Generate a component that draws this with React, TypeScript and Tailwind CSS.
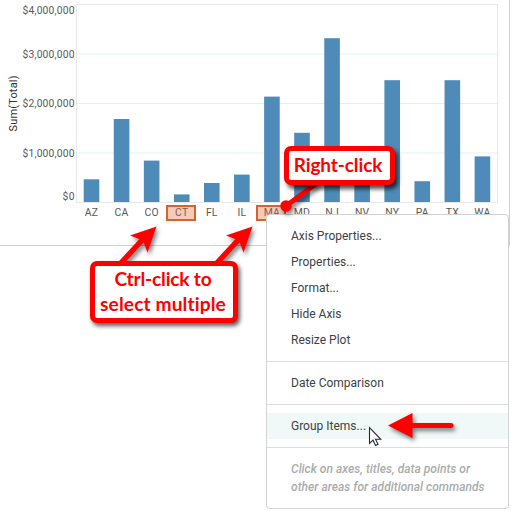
const bars: { state: string; top: number; selected?: boolean }[] = [
  { state: 'AZ', top: 179.3 },
  { state: 'CA', top: 119 },
  { state: 'CO', top: 160.6 },
  { state: 'CT', top: 194.4, selected: true },
  { state: 'FL', top: 183 },
  { state: 'IL', top: 174.6 },
  { state: 'MA', top: 96.6, selected: true },
  { state: 'MD', top: 132.8 },
  { state: 'NJ', top: 38.2 },
  { state: 'NV', top: 160 },
  { state: 'NY', top: 80.2 },
  { state: 'PA', top: 181.2 },
  { state: 'TX', top: 80.2 },
  { state: 'WA', top: 156.4 },
];

const ticks = [
  { label: '$4,000,000', y: 14 },
  { label: '$3,000,000', y: 57.5 },
  { label: '$2,000,000', y: 107 },
  { label: '$1,000,000', y: 156.5 },
  { label: '$0', y: 200 },
];

function Chart() {
  return (
    <section className="h-[246px] w-[510px] border-r border-b border-[#d0d0d0]">
      <svg width="509" height="245" className="block" fontFamily="Roboto, sans-serif" fill="#585858">
        <text transform="translate(17 131.5) rotate(-90)" fontSize="11" fill="#333" textLength="56">Sum(Total)</text>
        {ticks.map((t) => (
          <text key={t.label} x={t.label === '$0' ? 62.5 : 22.5} y={t.y} fontSize="10.3" textLength={t.label === '$0' ? 12 : 52}>{t.label}</text>
        ))}
        <path d="M77 54H497M77 153H497" stroke="#f1f9f8" strokeWidth="2" />
        <path d="M77 103.5H497" stroke="#ebebeb" />
        <rect x="76.5" y="4.5" width="421" height="198" fill="none" stroke="#e9e9e9" />
        {bars.map((b, i) => {
          const center = 91.5 + i * 30.07;
          return (
            <g key={b.state}>
              <rect x={center - 7.8} y={b.top} width="15.6" height={202 - b.top} fill="#4e8bb8" />
              {b.selected && <rect x={Math.round(center - 15)} y="206" width="28" height="14" fill="#f4cbb8" stroke="#d9612b" strokeWidth="2" />}
              <text x={center} y="215.7" fontSize="10.4" textAnchor="middle" letterSpacing="0.2" fill={b.selected ? '#8a5a48' : '#585858'}>{b.state}</text>
            </g>
          );
        })}
      </svg>
    </section>
  );
}

function MenuItem({ label, active = false }: { label: string; active?: boolean }) {
  return (
    <div className={`flex h-[26px] items-center pl-6 text-[12px] text-[#3c4245] ${active ? 'bg-[#f0f9f8]' : ''}`}>
      {label}
    </div>
  );
}

function ContextMenu() {
  return (
    <div className="absolute top-[214px] left-[266px] h-[295px] w-[243px] overflow-hidden rounded border border-[#d3d3d3] bg-white">
      <div className="border-b border-[#dcdcdc] pt-2 pb-2">
        <MenuItem label="Axis Properties..." />
        <MenuItem label="Properties..." />
        <MenuItem label="Format..." />
        <MenuItem label="Hide Axis" />
        <MenuItem label="Resize Plot" />
      </div>
      <div className="border-b border-[#dcdcdc] py-2">
        <MenuItem label="Date Comparison" />
      </div>
      <div className="border-b border-[#dcdcdc] py-2">
        <MenuItem label="Group Items..." active />
      </div>
      <div className="pt-3 pl-6 text-[12px] leading-[18px] font-medium tracking-[0.03px] whitespace-nowrap text-[#aaacac] italic">
        <p>Click on axes, titles, data points or</p>
        <p>other areas for additional commands</p>
      </div>
    </div>
  );
}

function Annotations() {
  return (
    <>
      <svg width="522" height="511" className="pointer-events-none absolute inset-0 drop-shadow-[2px_3px_2px_rgba(0,0,0,0.5)]" fill="red" stroke="red">
        <path d="M120 264L145 237M216 264L241 237" strokeWidth="5.5" />
        <path d="M156.5 226.5L147.5 252.5L143 240.5L130 235.5ZM252.5 226.5L243.5 252.5L239 240.5L226 235.5Z" stroke="none" />
        <path d="M286 206L317 183" strokeWidth="5" />
        <circle cx="286" cy="206" r="5.7" stroke="none" />
        <path d="M406 425.5H451" strokeWidth="5" strokeLinecap="round" />
        <path d="M388 425.5L412.5 413L412.5 438Z" stroke="none" />
      </svg>
      <div className="absolute top-[146px] left-[284px] flex h-[39px] w-[111px] items-center justify-center rounded-[7px] border-5 border-[red] bg-white pr-[3px] pb-px text-[19px] font-bold tracking-[-0.1px] whitespace-nowrap text-[red] shadow-[3px_4px_4px_rgba(0,0,0,0.7)]">
        Right-click
      </div>
      <div className="absolute top-[261px] left-[90px] flex h-[62px] w-[148px] flex-col items-center justify-center rounded-[7px] border-5 border-[red] bg-white pr-[2px] pb-[2px] text-[19.2px] leading-[25px] font-bold whitespace-nowrap text-[red] shadow-[2px_3px_4px_rgba(0,0,0,0.65)] [font-variant-ligatures:none]">
        <span className="tracking-[-0.2px]">Ctrl-click to</span>
        <span className="tracking-[0.1px]">select multiple</span>
      </div>
      <svg width="14" height="22" viewBox="0 0 14 22" className="absolute top-[426px] left-[368px]">
        <path d="M1.5 1.5V17.5L5 14.2L7.5 19.5L10 18.3L7.6 13.3H12.8Z" fill="white" stroke="#242938" strokeWidth="1.1" />
      </svg>
    </>
  );
}

export default function App() {
  return (
    <main className="relative h-[511px] w-[522px] overflow-hidden bg-white font-[Roboto,sans-serif]">
      <Chart />
      <ContextMenu />
      <div className="font-[Lato,sans-serif]">
        <Annotations />
      </div>
    </main>
  );
}
